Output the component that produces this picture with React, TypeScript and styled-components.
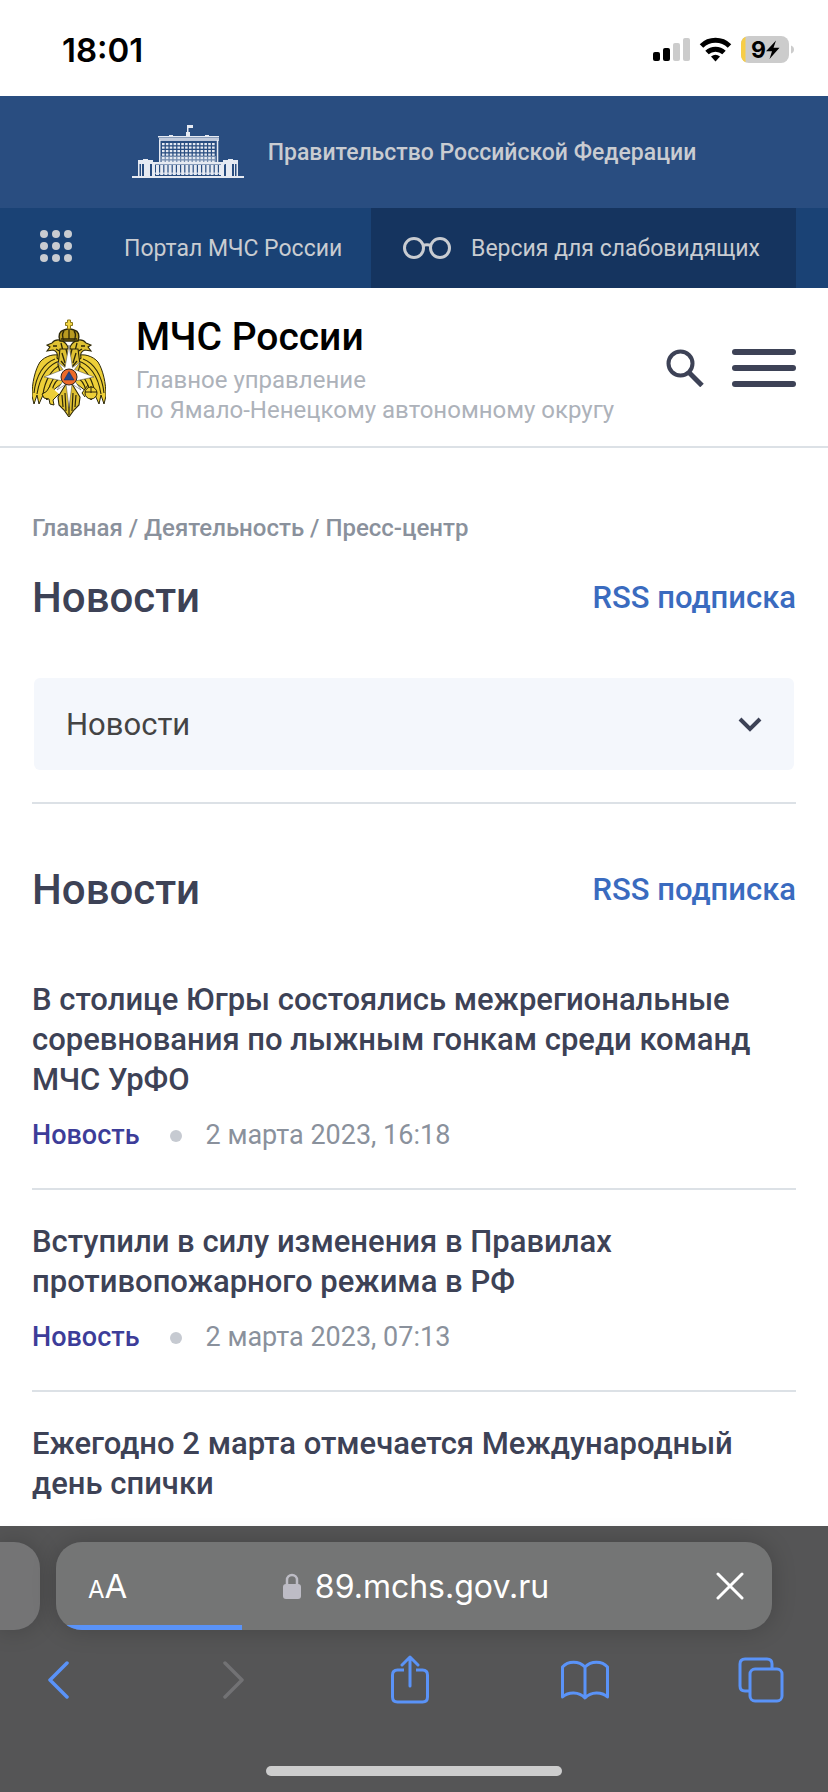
import React from "react";
import styled, { createGlobalStyle } from "styled-components";

const Global = createGlobalStyle`
  * { box-sizing: border-box; }
  body { margin: 0; background: #fff; font-family: Roboto, "Liberation Sans", sans-serif; color: #3d4256; }
  h1, h2, h3, p { margin: 0; font-weight: 500; }
  a { color: inherit; text-decoration: none; }
  button { border: 0; padding: 0; background: none; color: inherit; font: inherit; cursor: pointer; }
  svg { display: block; flex: none; }
`;

const Screen = styled.div`
  min-height: 100vh;
  display: flex;
  flex-direction: column;
`;

const StatusBar = styled.header`
  height: 96px;
  padding: 4px 34px 0 62px;
  display: flex;
  align-items: center;
  justify-content: space-between;
  font-family: Inter, sans-serif;
  color: #000;
`;

const Clock = styled.time`
  font-size: 33px;
  font-weight: 600;
`;

const GovBar = styled.a`
  height: 112px;
  background: #294d80;
  display: flex;
  align-items: center;
  justify-content: center;
  gap: 24px;
  font-size: 23px;
  font-weight: 500;

  && { color: #c9ccd1; }
`;

const ToolBar = styled.nav`
  height: 80px;
  padding-right: 32px;
  background: #1a4275;
  display: flex;
  align-items: stretch;
  justify-content: space-between;
  font-size: 23px;
  color: #c9ccd1;
`;

const PortalGroup = styled.div`
  display: flex;
  align-items: center;
  gap: 52px;
  padding-left: 40px;
`;

const AccessButton = styled.button`
  display: flex;
  align-items: center;
  gap: 20px;
  padding: 0 36px 0 32px;

  && { background: #15345f; }
`;

const SiteHeader = styled.header`
  height: 160px;
  padding: 23px 32px 0;
  display: flex;
  align-items: flex-start;
  border-bottom: 2px solid #dce1e6;
`;

const Brand = styled.a`
  flex: 1;
  display: flex;
  align-items: center;
  gap: 30px;
`;

const BrandName = styled.p`
  font-size: 39px;
  line-height: 52px;
  color: #000;
`;

const BrandOffice = styled.p`
  margin-top: 2px;
  font-size: 24px;
  line-height: 30px;
  font-weight: 400;
  color: #adb2ba;
`;

const HeaderActions = styled.div`
  display: flex;
  gap: 28px;
  padding-top: 38px;
`;

const Main = styled.main`
  flex: 1;
  padding: 64px 32px 0;
`;

const Crumbs = styled.nav`
  margin-bottom: 28px;
  font-size: 24px;
  line-height: 32px;
  font-weight: 500;
  color: #8a919c;
`;

const TitleRow = styled.div`
  display: flex;
  align-items: center;
  justify-content: space-between;
  line-height: 52px;
`;

const Title = styled.h1`
  font-size: 42px;
`;

const RssLink = styled.a`
  font-size: 31px;
  font-weight: 500;

  && { color: #3a6bbf; }
`;

const SelectWrap = styled.div`
  margin: 54px 2px 32px;
  height: 92px;
  display: grid;
  align-items: center;
  background: #f4f7fc;
  border-radius: 6px;

  > * { grid-area: 1 / 1; }
  > svg { justify-self: end; margin-right: 32px; pointer-events: none; }
`;

const Select = styled.select`
  appearance: none;
  width: 100%;
  height: 100%;
  padding: 0 32px;
  border: 0;
  background: transparent;
  font: 400 31px Roboto, sans-serif;
  color: #444;
`;

const Divider = styled.hr`
  margin: 0 0 60px;
  border: 0;
  border-top: 2px solid #dce1e6;
`;

const Feed = styled.section`
  padding-top: 64px;
`;

const NewsItem = styled.article`
  padding: 32px 0 36px;
  border-bottom: 2px solid #dce1e6;

  &:first-child { padding-top: 0; }
  &:last-child { border: 0; padding-bottom: 20px; }
`;

const NewsTitle = styled.h3`
  font-size: 31px;
  line-height: 40px;
`;

const Meta = styled.div`
  margin-top: 18px;
  display: flex;
  align-items: center;
  font-size: 27px;
  line-height: 34px;
  color: #8a919c;
`;

const Tag = styled.a`
  font-weight: 500;

  && { color: #3d3d99; }
`;

const Dot = styled.span`
  width: 12px;
  height: 12px;
  margin: 2px 24px 0 30px;
  border-radius: 50%;
  background: #c6cad1;
`;

const BrowserBar = styled.footer`
  height: 266px;
  padding-top: 16px;
  display: flex;
  flex-direction: column;
  background: #555556;
  font-family: Inter, sans-serif;
  color: #fff;
`;

const TabStrip = styled.div`
  display: flex;
  gap: 16px;
  padding-right: 56px;
`;

const PreviousTab = styled.button`
  width: 40px;
  height: 88px;
  border-radius: 0 26px 26px 0;
  box-shadow: 0 0 24px rgba(0, 0, 0, 0.2);

  && { background: #747475; }
`;

const AddressShadow = styled.div`
  flex: 1;
  display: flex;
  border-radius: 26px;
  box-shadow: 0 0 24px rgba(0, 0, 0, 0.2);
`;

const AddressBar = styled.div`
  flex: 1;
  height: 88px;
  position: relative;
  overflow: hidden;
  display: grid;
  grid-template-columns: 1fr auto 1fr;
  align-items: center;
  padding: 0 28px 0 32px;
  background: #747575;
  border-radius: 26px;
`;

const TextSize = styled.button`
  justify-self: start;

  && { font-size: 33px; }
  small { font-size: 24px; }
`;

const Host = styled.div`
  display: flex;
  align-items: center;
  gap: 14px;
  font-size: 32px;
`;

const StopButton = styled.button`
  justify-self: end;
`;

const Progress = styled.div`
  position: absolute;
  left: 0;
  bottom: 0;
  width: 26%;
  height: 5px;
  background: #5a93f8;
`;

const ToolRow = styled.nav`
  display: flex;
  justify-content: space-between;
  align-items: center;
  height: 100px;
  padding: 0 43px 0 34px;
`;

const ToolButton = styled.button<{ $muted?: boolean }>`
  width: 48px;
  display: flex;
  justify-content: center;

  && { color: ${(p) => (p.$muted ? "#727274" : "#5a93f8")}; }
`;

const HomeIndicator = styled.div`
  width: 296px;
  height: 10px;
  margin: 36px auto 0;
  border-radius: 5px;
  background: #cdcdcd;
`;

const StatusIcons = () => (
  <svg width="142" height="28" viewBox="652 36 142 28" role="img" aria-label="Сигнал, Wi-Fi, заряд 9%">
    <rect x="653" y="52" width="7" height="9" rx="2" />
    <rect x="663" y="48" width="7" height="13" rx="2" />
    <rect x="673" y="43" width="7" height="18" rx="2" fill="#ccc" />
    <rect x="683" y="38" width="7" height="23" rx="2" fill="#ccc" />
    <g fill="none" stroke="#000" strokeWidth="5">
      <path d="M701.500 46a20 20 0 0 1 28 0" />
      <path d="M707 52.500a12.500 12.500 0 0 1 17 0" />
    </g>
    <path d="M711 56.500q4.500-3.500 9 0l-4.500 5z" />
    <path d="M749 36h32a8 8 0 0 1 8 8v11a8 8 0 0 1-8 8h-32a8 8 0 0 1-8-8v-11a8 8 0 0 1 8-8z" fill="#ccc" />
    <path d="M745.500 36.800v25.400a8 8 0 0 1-4.500-7.200v-11a8 8 0 0 1 4.500-7.200z" fill="#f7cd46" />
    <path d="M791 45.500q3 1 3 4t-3 4z" fill="#ccc" />
    <text x="751" y="58" fontFamily="Inter" fontWeight="700" fontSize="23">9</text>
    <path d="M776 40.500l-10 10.700h6l-2.500 7.800 10-11.200h-6z" />
  </svg>
);

const Building = () => {
  const windows = [];
  for (let r = 0; r < 6; r++)
    for (let c = 0; c < 14; c++)
      windows.push(<rect key={`${r}-${c}`} x={30 + c * 3.85} y={19 + r * 3.5} width="2.600" height="2.200" />);
  const columns = [];
  for (let c = 0; c < 16; c++) columns.push(<rect key={c} x={24 + c * 4.2} y="41" width="3" height="10" />);
  return (
    <svg width="112" height="56" viewBox="0 0 112 56" fill="#e6eaf2" aria-hidden="true">
      <path d="M55 1h6v3h-4.500v4h1.500v4h-4v-4h1z" />
      <path d="M37 11h4v1h32v-1h4v1h10v1.500H26v-1.500h11z" />
      <path d="M27 14h60v3H27z" opacity="0.8" />
      <path d="M27 16h1.500v23h-1.500zM84.800 16h1.500v23h-1.500z" />
      <path d="M29 32h55v7H29z" opacity="0.4" />
      {windows}
      <path d="M20 38h73v2.500H20z" />
      {columns}
      <path d="M20 48.500h72v1.500H20z" opacity="0.7" />
      <path d="M6 36h5v-1h5v1h5v2h2v14h-3V40h-2v12h-6V40h-2v12h-1V40H7.500v12H6zM106 36h-5v-1h-5v1h-5v2h-2v14h3V40h2v12h6V40h2v12h1V40h1.500v12h1.500z" />
      <path d="M0 52h112v2H0z" />
    </svg>
  );
};

const Emblem = () => {
  const wing = (
    <g>
      <path d="M29 37C23 34 13 37 8 43 3 51 0 64 0 77l2 8 3-9 2 9 4-9 4 5 4-8 5-4 9-7z" fill="#edcf38" stroke="#2c2708" strokeWidth="1" />
      <path d="M28 42C17 45 8 56 5 75M29 46C19 50 13 62 11 75M30 51c-8 5-12 13-14 22M31 57c-6 3-10 9-11 15M23 40C12 44 4 56 2 74" fill="none" stroke="#2c2708" strokeWidth="1.100" />
      <path d="M36 28C32 20 24 19 20 24l-5 2 3 2-3 4 6-1c4 1 5 4 4 8l9 8z" fill="#dfc132" stroke="#2c2708" strokeWidth="1.100" />
      <path d="M21 27h4M24 30l5 3M29 24l2 8M30 36l4 6" stroke="#2c2708" strokeWidth="1.300" fill="none" />
    </g>
  );
  return (
    <svg width="74" height="98" viewBox="0 0 74 98" role="img" aria-label="Герб МЧС России">
      <path d="M37 60L26 78l1 8 5 5 5 7 5-7 5-5 1-8z" fill="#dfc132" stroke="#2c2708" strokeWidth="1.100" />
      <path d="M37 70v26M33 74l1 18M41 74l-1 18M30 76l1 12M44 76l-1 12" stroke="#2c2708" strokeWidth="1.200" />
      {wing}
      <g transform="translate(74 0) scale(-1 1)">{wing}</g>
      <path d="M28 30h18l2 16-4 14H30l-4-14z" fill="#dfc132" stroke="#2c2708" strokeWidth="1.100" />
      <path d="M30 34l3 10M44 34l-3 10M34 30l2 8M40 30l-2 8M29 42l5 6M45 42l-5 6" stroke="#2c2708" strokeWidth="1.300" />
      <path d="M28 22q-3-9 4-11 5-2 10 0 7 2 4 11z" fill="#b99a20" stroke="#2c2708" strokeWidth="1.400" />
      <path d="M37 10v10M32 12q-3 4 0 9M42 12q3 4 0 9M29 20h16" stroke="#2c2708" strokeWidth="1.300" fill="none" />
      <path d="M35.500 1h3v2.500h2v3h-2V10h-3V6.500h-2v-3h2z" fill="#f2d544" stroke="#8b7719" strokeWidth="1" />
      <path d="M18 67q-3 7-8 8l2 4 5 1 1 5 4 1-1-5 6-6M56 66l-6 8 3 4" fill="#edcf38" stroke="#2c2708" strokeWidth="1" />
      <circle cx="59" cy="74" r="6" fill="#edcf38" stroke="#2c2708" strokeWidth="1" />
      <path d="M53 73h12M59 67v7" stroke="#2c2708" />
      <path d="M37 26l3.500 22.500 8-6-6 8L62 58l-19 4 6 9-9-6-3 24-3-24-9 6 6-9-19-4 19-7.500-6-8 8 6z" fill="#fff" stroke="#444" strokeWidth="0.500" />
      <circle cx="37" cy="58" r="8" fill="#ec6a2a" stroke="#34281e" />
      <path d="M37 52.500l5 8.500H32z" fill="#23468c" stroke="#162c5c" strokeWidth="0.500" />
    </svg>
  );
};

const NEWS = [
  { title: "В столице Югры состоялись межрегиональные соревнования по лыжным гонкам среди команд МЧС УрФО", date: "2 марта 2023, 16:18" },
  { title: "Вступили в силу изменения в Правилах противопожарного режима в РФ", date: "2 марта 2023, 07:13" },
  { title: "Ежегодно 2 марта отмечается Международный день спички" },
];

export default function App() {
  return (
    <Screen>
      <Global />
      <StatusBar>
        <Clock>18:01</Clock>
        <StatusIcons />
      </StatusBar>
      <GovBar href="#gov">
        <Building />
        Правительство Российской Федерации
      </GovBar>
      <ToolBar aria-label="Порталы">
        <PortalGroup>
          <button aria-label="Сервисы">
            <svg width="32" height="36" viewBox="0 0 32 36" fill="#c9ccd1">
              {[4, 16, 28].map((y) => [4, 16, 28].map((x) => <circle key={`${x}-${y}`} cx={x} cy={y} r="4" />))}
            </svg>
          </button>
          <a href="#portal">Портал МЧС России</a>
        </PortalGroup>
        <AccessButton>
          <svg width="48" height="22" viewBox="0 0 48 22" fill="none" stroke="#c9ccd1" strokeWidth="3">
            <circle cx="11" cy="11" r="9.500" />
            <circle cx="37" cy="11" r="9.500" />
            <path d="M19.500 9q4.500-2.500 9 0" />
          </svg>
          Версия для слабовидящих
        </AccessButton>
      </ToolBar>
      <SiteHeader>
        <Brand href="#home">
          <Emblem />
          <div>
            <BrandName>МЧС России</BrandName>
            <BrandOffice>
              Главное управление
              <br />
              по Ямало-Ненецкому автономному округу
            </BrandOffice>
          </div>
        </Brand>
        <HeaderActions>
          <button aria-label="Поиск">
            <svg width="38" height="38" viewBox="0 0 38 38" fill="none" stroke="#3d4256" strokeWidth="4">
              <circle cx="14.500" cy="14.500" r="12" />
              <path d="M23.500 24l12.500 12.500" strokeWidth="5" />
            </svg>
          </button>
          <button aria-label="Меню">
            <svg width="64" height="38" viewBox="0 0 64 38" fill="#3d4256">
              <rect width="64" height="6" rx="3" />
              <rect y="16" width="64" height="6" rx="3" />
              <rect y="32" width="64" height="6" rx="3" />
            </svg>
          </button>
        </HeaderActions>
      </SiteHeader>
      <Main>
        <Crumbs aria-label="Навигация">
          <a href="#home">Главная</a> / <a href="#activity">Деятельность</a> / <a href="#press">Пресс-центр</a>
        </Crumbs>
        <TitleRow>
          <Title>Новости</Title>
          <RssLink href="#rss">RSS подписка</RssLink>
        </TitleRow>
        <SelectWrap>
          <Select aria-label="Раздел" defaultValue="news">
            <option value="news">Новости</option>
          </Select>
          <svg width="24" height="16" viewBox="0 0 24 16" fill="none" stroke="#3d4256" strokeWidth="4">
            <path d="M2 3l10 10L22 3" />
          </svg>
        </SelectWrap>
        <Divider />
        <TitleRow>
          <Title as="h2">Новости</Title>
          <RssLink href="#rss">RSS подписка</RssLink>
        </TitleRow>
        <Feed>
          {NEWS.map((n) => (
            <NewsItem key={n.title}>
              <NewsTitle>
                <a href="#news">{n.title}</a>
              </NewsTitle>
              {n.date && (
                <Meta>
                  <Tag href="#tag">Новость</Tag>
                  <Dot />
                  <time>{n.date}</time>
                </Meta>
              )}
            </NewsItem>
          ))}
        </Feed>
      </Main>
      <BrowserBar>
        <TabStrip>
          <PreviousTab aria-label="Предыдущая вкладка" />
          <AddressShadow>
            <AddressBar>
              <TextSize aria-label="Размер текста">
                <small>A</small>A
              </TextSize>
              <Host>
                <svg width="18" height="26" viewBox="0 0 18 26" fill="#bdbcc5">
                  <rect y="11" width="18" height="15" rx="3" />
                  <path d="M4 12V7a5 5 0 0 1 10 0v5" fill="none" stroke="#bdbcc5" strokeWidth="2.500" />
                </svg>
                89.mchs.gov.ru
              </Host>
              <StopButton aria-label="Остановить">
                <svg width="28" height="28" viewBox="0 0 28 28" fill="none" stroke="#fff" strokeWidth="3" strokeLinecap="round">
                  <path d="M2 2l24 24M26 2L2 26" />
                </svg>
              </StopButton>
              <Progress />
            </AddressBar>
          </AddressShadow>
        </TabStrip>
        <ToolRow aria-label="Браузер">
          <ToolButton aria-label="Назад">
            <svg width="22" height="38" viewBox="0 0 22 38" fill="none" stroke="currentColor" strokeWidth="3.500" strokeLinecap="round" strokeLinejoin="round">
              <path d="M20 2L3 19l17 17" />
            </svg>
          </ToolButton>
          <ToolButton $muted aria-label="Вперёд">
            <svg width="22" height="38" viewBox="0 0 22 38" fill="none" stroke="currentColor" strokeWidth="3.500" strokeLinecap="round" strokeLinejoin="round">
              <path d="M2 2l17 17L2 36" />
            </svg>
          </ToolButton>
          <ToolButton aria-label="Поделиться">
            <svg width="38" height="50" viewBox="0 0 38 50" fill="none" stroke="currentColor" strokeWidth="3" strokeLinecap="butt" strokeLinejoin="round">
              <path d="M13 15H6.500q-5 0-5 5v22q0 5 5 5h25q5 0 5-5V20q0-5-5-5H25" />
              <path d="M19 31V2M11 10l8-8 8 8" strokeLinecap="round" />
            </svg>
          </ToolButton>
          <ToolButton aria-label="Закладки">
            <svg width="48" height="40" viewBox="0 0 48 40" fill="none" stroke="currentColor" strokeWidth="3" strokeLinejoin="round">
              <path d="M24 7C18 .500 7 .500 1.500 7v30c6-5.500 16.500-5.500 22.500 1 6-6.500 16.500-6.500 22.500-1V7C41 .500 30 .500 24 7zM24 7v31" />
            </svg>
          </ToolButton>
          <ToolButton aria-label="Вкладки">
            <svg width="46" height="46" viewBox="0 0 46 46" fill="none" stroke="currentColor" strokeWidth="3" strokeLinejoin="round">
              <rect x="12" y="12" width="32" height="32" rx="5" />
              <path d="M11 34H7q-5 0-5-5V7q0-5 5-5h22q5 0 5 5v4" />
            </svg>
          </ToolButton>
        </ToolRow>
        <HomeIndicator />
      </BrowserBar>
    </Screen>
  );
}
